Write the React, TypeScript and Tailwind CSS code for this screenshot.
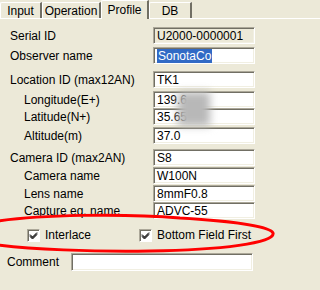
import type { ReactNode } from 'react'

const font = { fontFamily: '"Liberation Sans", Arial, sans-serif' }

function Field({ value, readOnly, selected, className = '' }: { value?: string; readOnly?: boolean; selected?: boolean; className?: string }) {
  return (
    <div
      className={`h-[17px] border border-t-[#aca899] border-l-[#aca899] border-b-white border-r-white shadow-[inset_1px_1px_0_#716f64,inset_-1px_-1px_0_#f1efe2] flex items-center pl-[3px] text-[12px] leading-none text-black ${
        readOnly ? 'bg-[#ece9d8]' : 'bg-white'
      } ${className}`}
    >
      {selected ? <span className="bg-[#316ac5] text-white px-[1px] py-[1px]">{value}</span> : value}
    </div>
  )
}

function Row({ label, indent, top, value, readOnly, selected }: { label: string; indent?: boolean; top: number; value?: string; readOnly?: boolean; selected?: boolean }) {
  return (
    <div className="flex items-center h-[17px]" style={{ marginTop: top }}>
      <div className={`w-[153px] text-[12px] leading-none ${indent ? 'pl-[24px]' : 'pl-[10px]'}`}>{label}</div>
      <Field value={value} readOnly={readOnly} selected={selected} className="w-[102px]" />
    </div>
  )
}

function Tab({ children, active, className = '' }: { children: ReactNode; active?: boolean; className?: string }) {
  return (
    <div
      className={`flex items-center justify-center border-t border-l border-white border-r-2 border-r-[#716f64] rounded-tl-[2px] text-[12px] leading-none ${
        active ? 'h-[19px] -mb-[1px] bg-[#ece9d8] z-10 px-[6px]' : 'h-[16px] px-[5px]'
      } ${className}`}
    >
      {children}
    </div>
  )
}

function Check({ label }: { label: string }) {
  return (
    <div className="flex items-center gap-[5px]">
      <div className="w-[13px] h-[13px] bg-white border border-t-[#aca899] border-l-[#aca899] border-b-white border-r-white shadow-[inset_1px_1px_0_#716f64] flex items-center justify-center">
        <svg width="9" height="9" viewBox="0 0 9 9">
          <path d="M1 3.5 L3.5 6 L8 1.5 M1 4.5 L3.5 7 L8 2.5 M1 5.5 L3.5 8 L8 3.5" stroke="#000" strokeWidth="1" fill="none" />
        </svg>
      </div>
      <span className="text-[12px] leading-none">{label}</span>
    </div>
  )
}

export default function App() {
  return (
    <div className="relative w-[320px] h-[290px] bg-[#ece9d8] overflow-hidden text-black" style={font}>
      <div className="flex items-end h-[19px] border-b border-white">
        <Tab className="w-[42px]">Input</Tab>
        <Tab className="w-[59px]">Operation</Tab>
        <Tab active className="w-[48px]">Profile</Tab>
        <Tab className="w-[43px]">DB</Tab>
      </div>

      <div className="flex flex-col">
        <Row label="Serial ID" top={8} value="U2000-0000001" readOnly />
        <Row label="Observer name" top={3} value="SonotaCo" selected />
        <Row label="Location ID (max12AN)" top={7} value="TK1" />
        <Row label="Longitude(E+)" indent top={3} value="139.6" />
        <Row label="Latitude(N+)" indent top={0} value="35.65" />
        <Row label="Altitude(m)" indent top={2} value="37.0" />
        <Row label="Camera ID (max2AN)" top={5} value="S8" />
        <Row label="Camera name" indent top={1} value="W100N" />
        <Row label="Lens name" indent top={1} value="8mmF0.8" />
        <Row label="Capture eq. name" indent top={0} value="ADVC-55" />

        <div className="flex items-center h-[14px] mt-[9px]">
          <div className="pl-[27px] w-[139px]">
            <Check label="Interlace" />
          </div>
          <Check label="Bottom Field First" />
        </div>

        <div className="flex items-center h-[18px] mt-[11px]">
          <div className="w-[71px] pl-[7px] text-[12px] leading-none">Comment</div>
          <Field className="w-[182px] h-[18px]" />
        </div>
      </div>

      <div className="absolute left-[178px] top-[92px] w-[32px] h-[34px] bg-[#b8b8b8] blur-[4px]" />

      <svg className="absolute left-0 top-0" width="320" height="290" viewBox="0 0 320 290">
        <path
          d="M -2 221 C 40 215, 120 213, 180 218 C 230 221, 270 226, 273 233 C 276 243, 220 250, 150 251 C 90 252, 30 249, -2 245"
          stroke="#ff0000"
          strokeWidth="3"
          fill="none"
        />
      </svg>
    </div>
  )
}
